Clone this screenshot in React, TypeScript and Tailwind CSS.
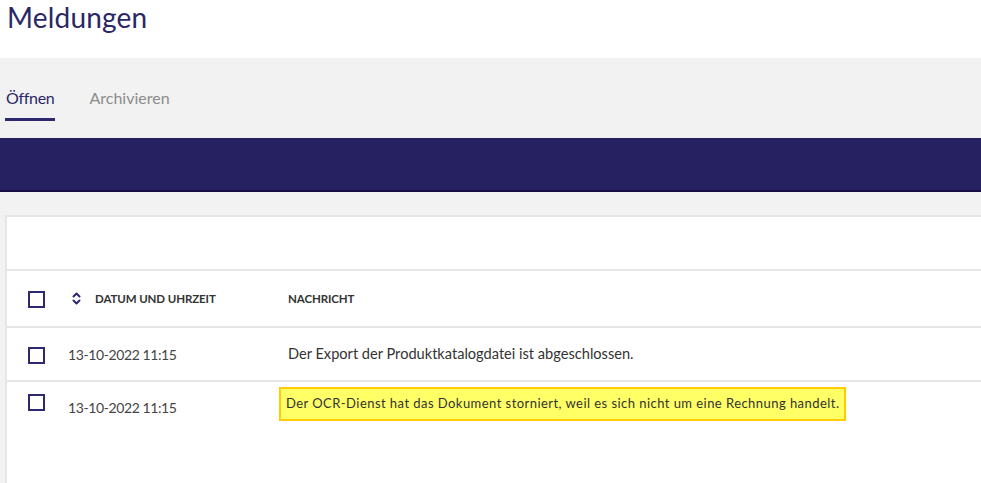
import React from "react";

const Checkbox = ({ className = "" }: { className?: string }) => (
  <div className={`w-[17px] h-[17px] border-2 border-[#2e2870] bg-white ${className}`}></div>
);

const SortIcon = () => (
  <svg width="9" height="13" viewBox="0 0 9 13" fill="none" stroke="#2e2870" strokeWidth="2" strokeLinecap="round" strokeLinejoin="round">
    <path d="M1.5 4.5 L4.5 1.5 L7.5 4.5" />
    <path d="M1.5 8.5 L4.5 11.5 L7.5 8.5" />
  </svg>
);

export default function App() {
  return (
    <div className="h-[483px] overflow-hidden bg-white" style={{ fontFamily: "Lato, 'Noto Sans', sans-serif" }}>
      {/* Title */}
      <div className="h-[58px] pl-[7px] bg-white">
        <h1 className="text-[28px] leading-[34px] text-[#2b2766] tracking-[0.2px]">Meldungen</h1>
      </div>

      {/* Tabs */}
      <div className="h-[80px] bg-[#f2f2f2] flex flex-row items-end pl-[5px]">
        <div className="flex flex-col mr-[34px]">
          <span className="text-[16px] text-[#2b2766] tracking-[-0.3px] px-[1px] mb-[8px]">Öffnen</span>
          <div className="h-[3px] w-[50px] bg-[#2e2870] mb-[17px]"></div>
        </div>
        <div className="flex flex-col">
          <span className="text-[16px] text-[#8c8c8c] mb-[28px]">Archivieren</span>
        </div>
      </div>

      {/* Navy bar */}
      <div className="h-[54px] bg-[#262262] border-b-2 border-[#170f45]"></div>

      {/* Content */}
      <div className="bg-[#f2f2f2] pt-[23px] pl-[5px] h-full">
        <div className="bg-white border-l-2 border-t-2 border-[#e6e6e6] h-full">
          <div className="h-[54px] border-b-2 border-[#e5e5e5]"></div>

          {/* Header row */}
          <div className="h-[57px] border-b-2 border-[#e5e5e5] flex flex-row items-center">
            <div className="w-[61px] pl-[21px]">
              <Checkbox className="mt-[1px]" />
            </div>
            <div className="w-[220px] flex flex-row items-center">
              <span className="ml-[4px] mr-[14px] flex"><SortIcon /></span>
              <span className="text-[11.5px] font-bold text-[#333333] tracking-[-0.1px]">DATUM UND UHRZEIT</span>
            </div>
            <span className="text-[11.5px] font-bold text-[#333333] tracking-[-0.1px]">NACHRICHT</span>
          </div>

          {/* Row 1 */}
          <div className="h-[54px] border-b-2 border-[#e5e5e5] flex flex-row items-center">
            <div className="w-[61px] pl-[21px]">
              <Checkbox className="mt-[3px]" />
            </div>
            <div className="w-[220px] text-[14px] text-[#444444] tracking-[-0.4px]">13-10-2022 11:15</div>
            <div className="text-[14.6px] text-[#333333]">Der Export der Produktkatalogdatei ist abgeschlossen.</div>
          </div>

          {/* Row 2 */}
          <div className="flex flex-row pt-[5px]">
            <div className="w-[61px] pl-[21px] pt-[7px]">
              <Checkbox />
            </div>
            <div className="w-[211px] text-[14px] text-[#444444] tracking-[-0.4px] pt-[10px]">13-10-2022 11:15</div>
            <div className="bg-[#ffff66] border-2 border-[#ffcc00] px-[5px] h-[34px] flex items-center text-[13px] text-[#333333] tracking-[0.45px]">
              Der OCR-Dienst hat das Dokument storniert, weil es sich nicht um eine Rechnung handelt.
            </div>
          </div>
        </div>
      </div>
    </div>
  );
}
